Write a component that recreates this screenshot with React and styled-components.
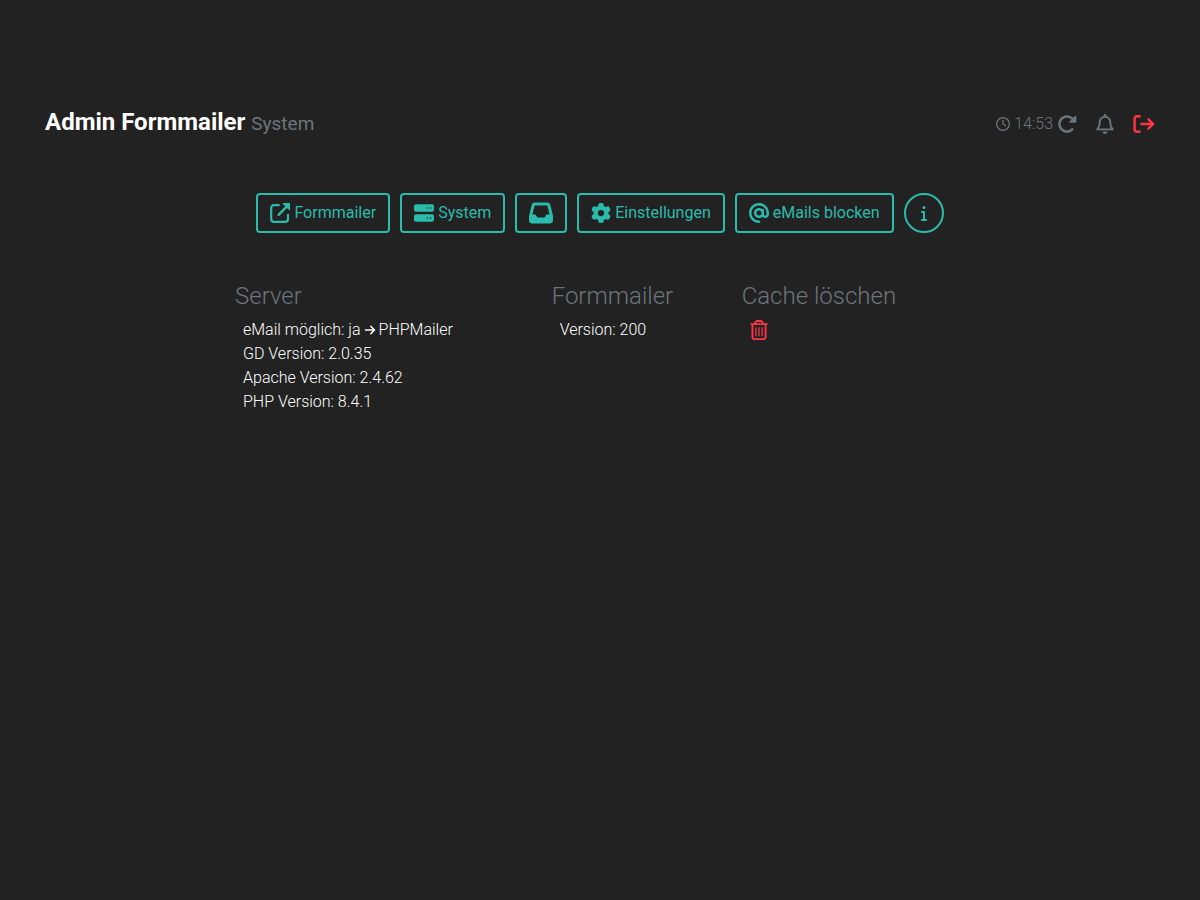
import React from "react";
import styled, { createGlobalStyle, css } from "styled-components";
import {
  FaArrowRight,
  FaAt,
  FaGear,
  FaInbox,
  FaInfo,
  FaRegBell,
  FaRegClock,
  FaRegTrashCan,
  FaRotateRight,
} from "react-icons/fa6";

const colors = {
  background: "#222222",
  text: "#ffffff",
  muted: "#6c757d",
  accent: "#2bbbad",
  danger: "#ff3547",
};

const GlobalStyle = createGlobalStyle`
  *, *::before, *::after { box-sizing: border-box; }
  body {
    margin: 0;
    background: ${colors.background};
    color: ${colors.text};
    font-family: Roboto, "Liberation Sans", sans-serif;
    font-size: 16px;
    font-weight: 300;
    line-height: 24px;
  }
  svg { flex: none; }
`;

const Page = styled.div`
  max-width: 1140px;
  margin: 0 auto;
  padding: 104px 15px 32px;
`;

const Header = styled.header`
  display: flex;
  align-items: flex-start;
  justify-content: space-between;
`;

const Title = styled.h1`
  margin: 0;
  font-size: 24px;
  font-weight: 700;
  line-height: 36px;
`;

const Subtitle = styled.small`
  color: ${colors.muted};
  font-size: 19px;
  font-weight: 400;
`;

const Tools = styled.div`
  display: flex;
  align-items: center;
  gap: 19px;
  height: 40px;
  color: ${colors.muted};
`;

const Clock = styled.div`
  display: flex;
  align-items: center;
  gap: 4px;
`;

const IconAction = styled.button`
  display: inline-flex;
  padding: 0;
  border: 0;
  background: none;
  color: ${(p) => (p.$danger ? colors.danger : colors.muted)};
  cursor: pointer;
  svg {
    width: ${(p) => p.$width || 20}px;
    height: 20px;
  }
`;

const Nav = styled.nav`
  display: flex;
  flex-wrap: wrap;
  justify-content: center;
  gap: 10px;
  padding: 49px 0 45px;
`;

const NavLink = styled.a`
  display: inline-flex;
  align-items: center;
  justify-content: center;
  gap: 4px;
  height: 40px;
  padding: 0 12px;
  border: 2px solid ${colors.accent};
  border-radius: 4px;
  color: ${colors.accent};
  font-weight: 400;
  line-height: 26px;
  text-decoration: none;
  svg { width: 20px; height: 20px; }
  ${(p) =>
    p.$round &&
    css`
      width: 40px;
      padding: 0;
      border-radius: 50%;
      svg { width: 16px; height: 16px; }
    `}
  ${(p) => p.$wide && css`svg { width: 24px; height: 24px; }`}
`;

const Columns = styled.main`
  display: grid;
  grid-template-columns: 5fr 3fr 4fr;
  width: 100%;
  max-width: 760px;
  margin: 0 auto;
`;

const Column = styled.section`
  padding: 0 15px;
`;

const ColumnTitle = styled.h2`
  margin: 0 0 4px;
  color: ${colors.muted};
  font-size: 24px;
  font-weight: 300;
  line-height: 36px;
`;

const List = styled.ul`
  margin: 0;
  padding: 0 0 0 8px;
  list-style: none;
`;

const Item = styled.li`
  display: flex;
  align-items: center;
  gap: 3px;
  height: 24px;
  white-space: nowrap;
`;

const ExternalIcon = () => (
  <svg viewBox="0 0 20 20" fill="none" aria-hidden="true">
    <path
      d="M8.800 2.200H4a2.800 2.800 0 0 0-2.800 2.800V16A2.800 2.800 0 0 0 4 18.800h11.200A2.800 2.800 0 0 0 18 16v-4.200"
      stroke="currentColor"
      strokeWidth="2.200"
      strokeLinecap="round"
    />
    <path d="M8.600 11.800 16.200 4.200" stroke="currentColor" strokeWidth="2.400" strokeLinecap="round" />
    <path d="M13.300 0h6q.7 0 .7.700v6q0 1.200-.9.400L12.900.900Q12.100 0 13.300 0Z" fill="currentColor" />
  </svg>
);

const ServerIcon = () => (
  <svg viewBox="0 0 20 20" fill="currentColor" aria-hidden="true">
    <path
      fillRule="evenodd"
      d="M2 1.200h16a2 2 0 0 1 2 2v3.600a2 2 0 0 1-2 2H2a2 2 0 0 1-2-2V3.200a2 2 0 0 1 2-2ZM13.500 4.200a.8.8 0 1 0 0 1.600.8.8 0 0 0 0-1.600Zm3.200 0a.8.8 0 1 0 0 1.600.8.8 0 0 0 0-1.600Z"
    />
    <path
      fillRule="evenodd"
      d="M2 11.200h16a2 2 0 0 1 2 2v3.600a2 2 0 0 1-2 2H2a2 2 0 0 1-2-2v-3.600a2 2 0 0 1 2-2ZM13.500 14.200a.8.8 0 1 0 0 1.600.8.8 0 0 0 0-1.600Zm3.200 0a.8.8 0 1 0 0 1.600.8.8 0 0 0 0-1.600Z"
    />
  </svg>
);

const LogoutIcon = () => (
  <svg
    viewBox="0 0 22 20"
    fill="none"
    stroke="currentColor"
    strokeWidth="2.400"
    strokeLinecap="round"
    strokeLinejoin="round"
    aria-hidden="true"
  >
    <path d="M6.600 2.200H4.200a2.600 2.600 0 0 0-2.600 2.600v10.400a2.600 2.600 0 0 0 2.600 2.600h2.400" />
    <path d="M8.400 10h11.200M15.400 5.400 20.200 10l-4.800 4.600" />
  </svg>
);

export default function App() {
  return (
    <>
      <GlobalStyle />
      <Page>
        <Header>
          <Title>
            Admin Formmailer <Subtitle>System</Subtitle>
          </Title>
          <Tools>
            <Clock>
              <FaRegClock size={14} />
              <time>14:53</time>
              <IconAction type="button" aria-label="Neu laden">
                <FaRotateRight />
              </IconAction>
            </Clock>
            <IconAction type="button" aria-label="Benachrichtigungen" $width={18}>
              <FaRegBell />
            </IconAction>
            <IconAction type="button" aria-label="Abmelden" $danger $width={22}>
              <LogoutIcon />
            </IconAction>
          </Tools>
        </Header>
        <Nav>
          <NavLink href="#formmailer"><ExternalIcon />Formmailer</NavLink>
          <NavLink href="#system"><ServerIcon />System</NavLink>
          <NavLink href="#postfach" aria-label="Postfach" $wide><FaInbox /></NavLink>
          <NavLink href="#einstellungen"><FaGear />Einstellungen</NavLink>
          <NavLink href="#blocken"><FaAt />eMails blocken</NavLink>
          <NavLink href="#info" aria-label="Info" $round><FaInfo /></NavLink>
        </Nav>
        <Columns>
          <Column>
            <ColumnTitle>Server</ColumnTitle>
            <List>
              <Item>eMail möglich: ja <FaArrowRight size={12} /> PHPMailer</Item>
              <Item>GD Version: 2.0.35</Item>
              <Item>Apache Version: 2.4.62</Item>
              <Item>PHP Version: 8.4.1</Item>
            </List>
          </Column>
          <Column>
            <ColumnTitle>Formmailer</ColumnTitle>
            <List>
              <Item>Version: 200</Item>
            </List>
          </Column>
          <Column>
            <ColumnTitle>Cache löschen</ColumnTitle>
            <List>
              <Item>
                <IconAction type="button" aria-label="Cache löschen" $danger $width={18}>
                  <FaRegTrashCan />
                </IconAction>
              </Item>
            </List>
          </Column>
        </Columns>
      </Page>
    </>
  );
}
